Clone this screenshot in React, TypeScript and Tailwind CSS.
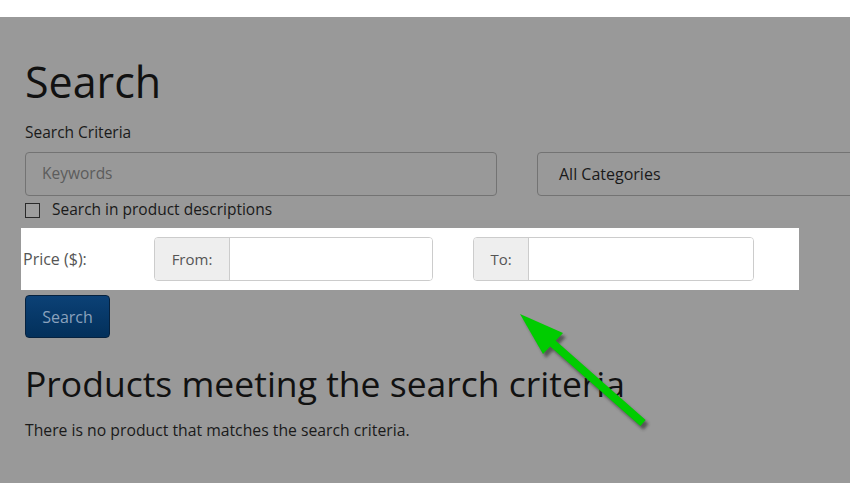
const Arrow = () => {
  return (
    <svg
      className="absolute left-0 top-0 pointer-events-none"
      width="850"
      height="500"
      viewBox="0 0 850 500"
    >
      <defs>
        <filter id="arrowShadow" x="-20%" y="-20%" width="140%" height="140%">
          <feGaussianBlur stdDeviation="1.5" />
        </filter>
      </defs>
      <g transform="translate(3 4)" filter="url(#arrowShadow)" opacity="0.55">
        <line x1="643" y1="423" x2="550" y2="341" stroke="#222" strokeWidth="8" />
        <polygon points="520,314 563,333 543,354" fill="#222" />
      </g>
      <line x1="643" y1="423" x2="550" y2="341" stroke="#00cc00" strokeWidth="8" />
      <polygon points="520,314 563,333 543,354" fill="#00cc00" />
    </svg>
  );
};

const PriceGroup = ({ label, addonWidth, width }: { label: string; addonWidth: string; width: string }) => {
  return (
    <div className={`flex h-[44px] rounded-[4px] border border-[#cccccc] overflow-hidden ${width}`}>
      <span className={`flex items-center justify-center bg-[#eeeeee] border-r border-[#cccccc] text-[15px] text-[#555555] ${addonWidth}`}>
        {label}
      </span>
      <span className="flex-1 bg-white" />
    </div>
  );
};

export default function App() {
  return (
    <div className="relative w-[850px] h-[500px] bg-white overflow-hidden font-['Open_Sans',sans-serif]">
      <section className="mt-[17px] h-[466px] bg-[#999999] pl-[25px] pt-[43px] overflow-hidden">
        <h1 className="text-[43px] leading-none text-[#111111]">Search</h1>
        <p className="mt-[19px] text-[15.5px] leading-[20px] text-[#1a1a1a]">Search Criteria</p>

        <div className="mt-[10px] flex gap-[40px]">
          <div className="w-[472px] h-[44px] shrink-0 rounded-[4px] border border-[#737373] flex items-center pl-[16px] text-[15.5px] text-[#5c5c5c]">
            Keywords
          </div>
          <div className="w-[340px] h-[44px] shrink-0 rounded-[4px] border border-[#737373] flex items-center pl-[21px] text-[16px] text-[#1a1a1a]">
            All Categories
          </div>
        </div>

        <label className="mt-[4px] flex items-center gap-[12px] h-[20px] text-[15.5px] text-[#1a1a1a]">
          <span className="w-[15px] h-[15px] border border-[#2a2a2a] bg-[#9e9e9e]" />
          Search in product descriptions
        </label>

        <div className="mt-[8px] -ml-[4px] w-[778px] h-[62px] bg-white pl-[2px] flex items-center">
          <span className="w-[131px] text-[16px] text-[#555555]">Price ($):</span>
          <PriceGroup label="From:" addonWidth="w-[75px]" width="w-[279px]" />
          <div className="w-[40px]" />
          <PriceGroup label="To:" addonWidth="w-[55px]" width="w-[281px]" />
        </div>

        <button className="mt-[5px] w-[85px] h-[43px] rounded-[4px] border border-[#06223f] bg-gradient-to-b from-[#0c4176] to-[#03305b] text-[16px] text-[#8ba2bd]">
          Search
        </button>

        <h2 className="mt-[28px] text-[35.5px] leading-none text-[#111111]">Products meeting the search criteria</h2>
        <p className="mt-[18px] text-[15.75px] leading-[20px] text-[#1a1a1a]">There is no product that matches the search criteria.</p>
      </section>
      <Arrow />
    </div>
  );
}
